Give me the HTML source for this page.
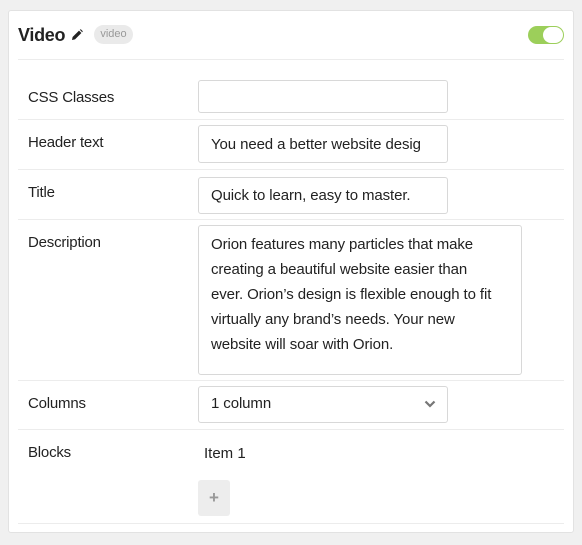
<!DOCTYPE html>
<html><head><style>
*{box-sizing:border-box;margin:0;padding:0}
body{width:582px;height:545px;background:#f0f0f0;font-family:"Liberation Sans",sans-serif;position:relative;overflow:hidden;color:#222}
.card{position:absolute;left:8px;top:10px;width:566px;height:523px;background:#fff;border:1px solid #e2e2e2;border-radius:3px}
.a{position:absolute}
.line{position:absolute;left:18px;width:546px;height:1px;background:#ececec}
.lbl{position:absolute;left:28px;font-size:15px;color:#222;letter-spacing:-0.2px}
.in{position:absolute;left:198px;width:250px;height:33px;border:1px solid #d8d8d8;border-radius:3px;font-size:15px;padding:0 12px;line-height:31px;white-space:nowrap;overflow:hidden;color:#222;letter-spacing:-0.1px}
</style></head><body>
<div class="card"></div>
<div class="a" style="left:18px;top:25px;font-size:18px;font-weight:bold;color:#222;letter-spacing:-0.3px">Video</div>
<svg class="a" style="left:71px;top:29px" width="12" height="12" viewBox="0 0 12 12"><path d="M1 11l0.6-3L8 1.6l2.4 2.4L4 10.4z" fill="#222"/><path d="M8.8 0.8l1-0.6 2 2-0.6 1z" fill="#222"/></svg>
<div class="a" style="left:94px;top:25px;width:39px;height:19px;background:#eaeaea;border-radius:10px;font-size:11px;color:#999;text-align:center;line-height:19px">video</div>
<div class="a" style="left:528px;top:26px;width:36px;height:18px;background:#9ccf5a;border-radius:9px"></div>
<div class="a" style="left:543px;top:27px;width:20px;height:16px;background:#fff;border-radius:8px"></div>
<div class="line" style="top:59px"></div>
<div class="lbl" style="top:89px">CSS Classes</div>
<div class="in" style="top:80px"></div>
<div class="line" style="top:119px"></div>
<div class="lbl" style="top:134px">Header text</div>
<div class="in" style="top:125px;height:38px;line-height:37px;text-overflow:clip">You need a better website desig</div>
<div class="line" style="top:169px"></div>
<div class="lbl" style="top:184px">Title</div>
<div class="in" style="top:177px;height:37px;line-height:35px">Quick to learn, easy to master.</div>
<div class="line" style="top:219px"></div>
<div class="lbl" style="top:234px">Description</div>
<div class="in" style="top:225px;width:324px;height:150px;white-space:normal;line-height:25px;padding:6px 24px 5px 12px">Orion features many particles that make creating a beautiful website easier than ever. Orion’s design is flexible enough to fit virtually any brand’s needs. Your new website will soar with Orion.</div>
<div class="line" style="top:380px"></div>
<div class="lbl" style="top:395px">Columns</div>
<div class="in" style="top:386px;height:37px;line-height:33px">1 column</div>
<svg class="a" style="left:424px;top:400px" width="12" height="8" viewBox="0 0 12 8"><path d="M1.5 1.5l4.5 4.5 4.5-4.5" fill="none" stroke="#777" stroke-width="2.2"/></svg>
<div class="line" style="top:429px"></div>
<div class="lbl" style="top:444px">Blocks</div>
<div class="a" style="left:204px;top:445px;font-size:15px">Item 1</div>
<div class="a" style="left:198px;top:480px;width:32px;height:36px;background:#ededed;border-radius:3px;color:#999;font-size:17px;text-align:center;line-height:36px;font-weight:bold">+</div>
<div class="line" style="top:523px"></div>
</body></html>
